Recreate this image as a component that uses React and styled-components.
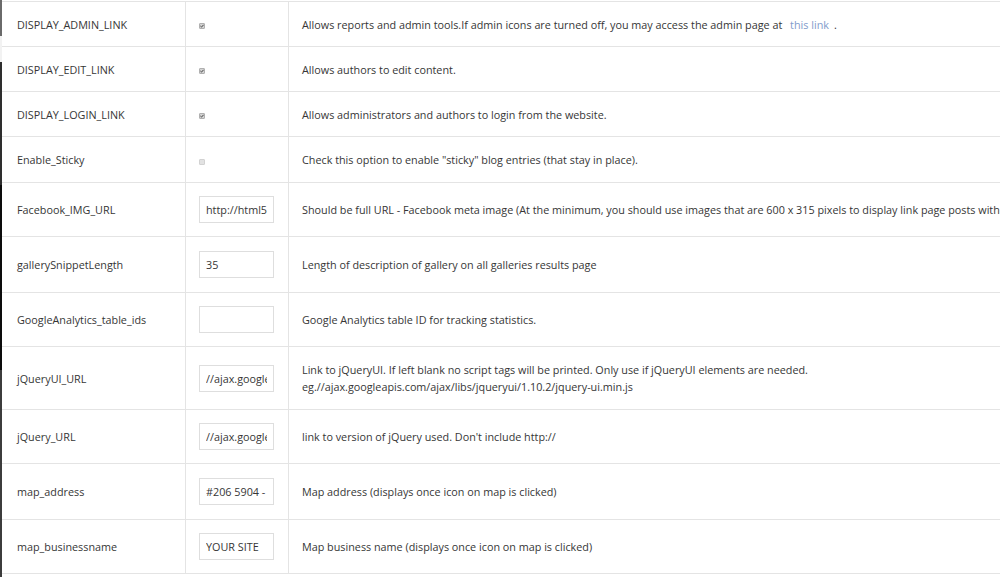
import React from "react";
import styled, { createGlobalStyle } from "styled-components";

const GlobalStyle = createGlobalStyle`
    html, body {
        margin: 0;
        padding: 0;
        background: #fff;
        overflow: hidden;
    }
    body {
        font-family: "Open Sans", "Liberation Sans", sans-serif;
        font-size: 10.8px;
        color: #363636;
    }
`

const Page = styled.div`
    display: flex;
    width: 1000px;
    height: 577px;
    overflow: hidden;
    padding-top: 1px;
    box-sizing: border-box;
`
const Edge = styled.div`
    flex: 0 0 2px;
    height: 577px;
    margin-top: -1px;
    background: linear-gradient(to bottom,
        #6a6a6a 0px, #6a6a6a 36px,
        #f2f2f2 36px, #f2f2f2 62px,
        #2e2e2e 62px, #2e2e2e 185px,
        #0c0c0c 185px, #0c0c0c 370px,
        #3c3c3c 370px, #3c3c3c 577px);
`
const Table = styled.table`
    border-collapse: collapse;
    table-layout: fixed;
    width: 1500px;
    flex: 0 0 1500px;
    align-self: flex-start;
    border-top: 1px solid #e4e4e4;
`
const Row = styled.tr`
    height: ${p => p.$h}px;
    border-bottom: 1px solid #e4e4e4;
`
const Cell = styled.td`
    padding: 0 14px;
    vertical-align: middle;
    line-height: 17px;
    white-space: nowrap;
    overflow: hidden;
`
const NameCell = styled(Cell)`
    width: 154px;
    padding-left: 15px;
    border-right: 1px solid #e4e4e4;
`
const ValueCell = styled(Cell)`
    width: 75px;
    padding-left: 13px;
    border-right: 1px solid #e4e4e4;
`
const DescCell = styled(Cell)`
    padding-left: 13px;
`
const Box = styled.span`
    display: inline-flex;
    align-items: center;
    justify-content: center;
    box-sizing: border-box;
    width: 6px;
    height: 6px;
    margin-top: 1px;
    vertical-align: middle;
    background: ${p => p.$checked ? "#d4d4d4" : "#e2e2e2"};
    border: 1px solid ${p => p.$checked ? "#b0b0b0" : "#d2d2d2"};
    border-radius: 1px;
`
const Field = styled.input`
    display: block;
    box-sizing: border-box;
    width: 75px;
    height: 27px;
    padding: 0 6px;
    border: 1px solid #dedede;
    font-family: "Open Sans", "Liberation Sans", sans-serif;
    font-size: 10.8px;
    color: #363636;
    background: #fff;
    outline: none;
`
const Link = styled.a`
    color: #7f9ccb;
    text-decoration: none;
    padding: 0 5px;
`

const rows = [
    {name: "DISPLAY_ADMIN_LINK", type: "check", checked: true, h: 45,
        desc: <>Allows reports and admin tools.If admin icons are turned off, you may access the admin page at <Link href="#">this link</Link>.</>},
    {name: "DISPLAY_EDIT_LINK", type: "check", checked: true, h: 45, desc: "Allows authors to edit content."},
    {name: "DISPLAY_LOGIN_LINK", type: "check", checked: true, h: 45, desc: "Allows administrators and authors to login from the website."},
    {name: "Enable_Sticky", type: "check", checked: false, h: 46, desc: 'Check this option to enable "sticky" blog entries (that stay in place).'},
    {name: "Facebook_IMG_URL", type: "text", value: "http://html5", h: 54,
        desc: "Should be full URL - Facebook meta image (At the minimum, you should use images that are 600 x 315 pixels to display link page posts with larger images.)"},
    {name: "gallerySnippetLength", type: "text", value: "35", h: 56, desc: "Length of description of gallery on all galleries results page"},
    {name: "GoogleAnalytics_table_ids", type: "text", value: "", h: 54, desc: "Google Analytics table ID for tracking statistics."},
    {name: "jQueryUI_URL", type: "text", value: "//ajax.googleapis.com", h: 63,
        desc: <>Link to jQueryUI. If left blank no script tags will be printed. Only use if jQueryUI elements are needed.<br />eg.//ajax.googleapis.com/ajax/libs/jqueryui/1.10.2/jquery-ui.min.js</>},
    {name: "jQuery_URL", type: "text", value: "//ajax.googleapis.com", h: 54, desc: "link to version of jQuery used. Don't include http://"},
    {name: "map_address", type: "text", value: "#206 5904 - 167 St", h: 56, desc: "Map address (displays once icon on map is clicked)"},
    {name: "map_businessname", type: "text", value: "YOUR SITE", h: 54, desc: "Map business name (displays once icon on map is clicked)"},
]

const Check = ({checked}) => (
    <Box $checked={checked}>
        {checked && (
            <svg width="4" height="4" viewBox="0 0 4 4" style={{display: "block"}}>
                <path d="M0.4 2 L1.5 3.1 L3.6 0.8" stroke="#333" strokeWidth="0.9" fill="none" />
            </svg>
        )}
    </Box>
)

const App = () => {
    return (
        <>
            <GlobalStyle />
            <Page>
                <Edge />
                <Table>
                    <tbody>
                        {rows.map(r => (
                            <Row key={r.name} $h={r.h}>
                                <NameCell>{r.name}</NameCell>
                                <ValueCell>
                                    {r.type === "check"
                                        ? <Check checked={r.checked} />
                                        : <Field type="text" defaultValue={r.value} readOnly />}
                                </ValueCell>
                                <DescCell>{r.desc}</DescCell>
                            </Row>
                        ))}
                    </tbody>
                </Table>
            </Page>
        </>
    )
}

export default App
